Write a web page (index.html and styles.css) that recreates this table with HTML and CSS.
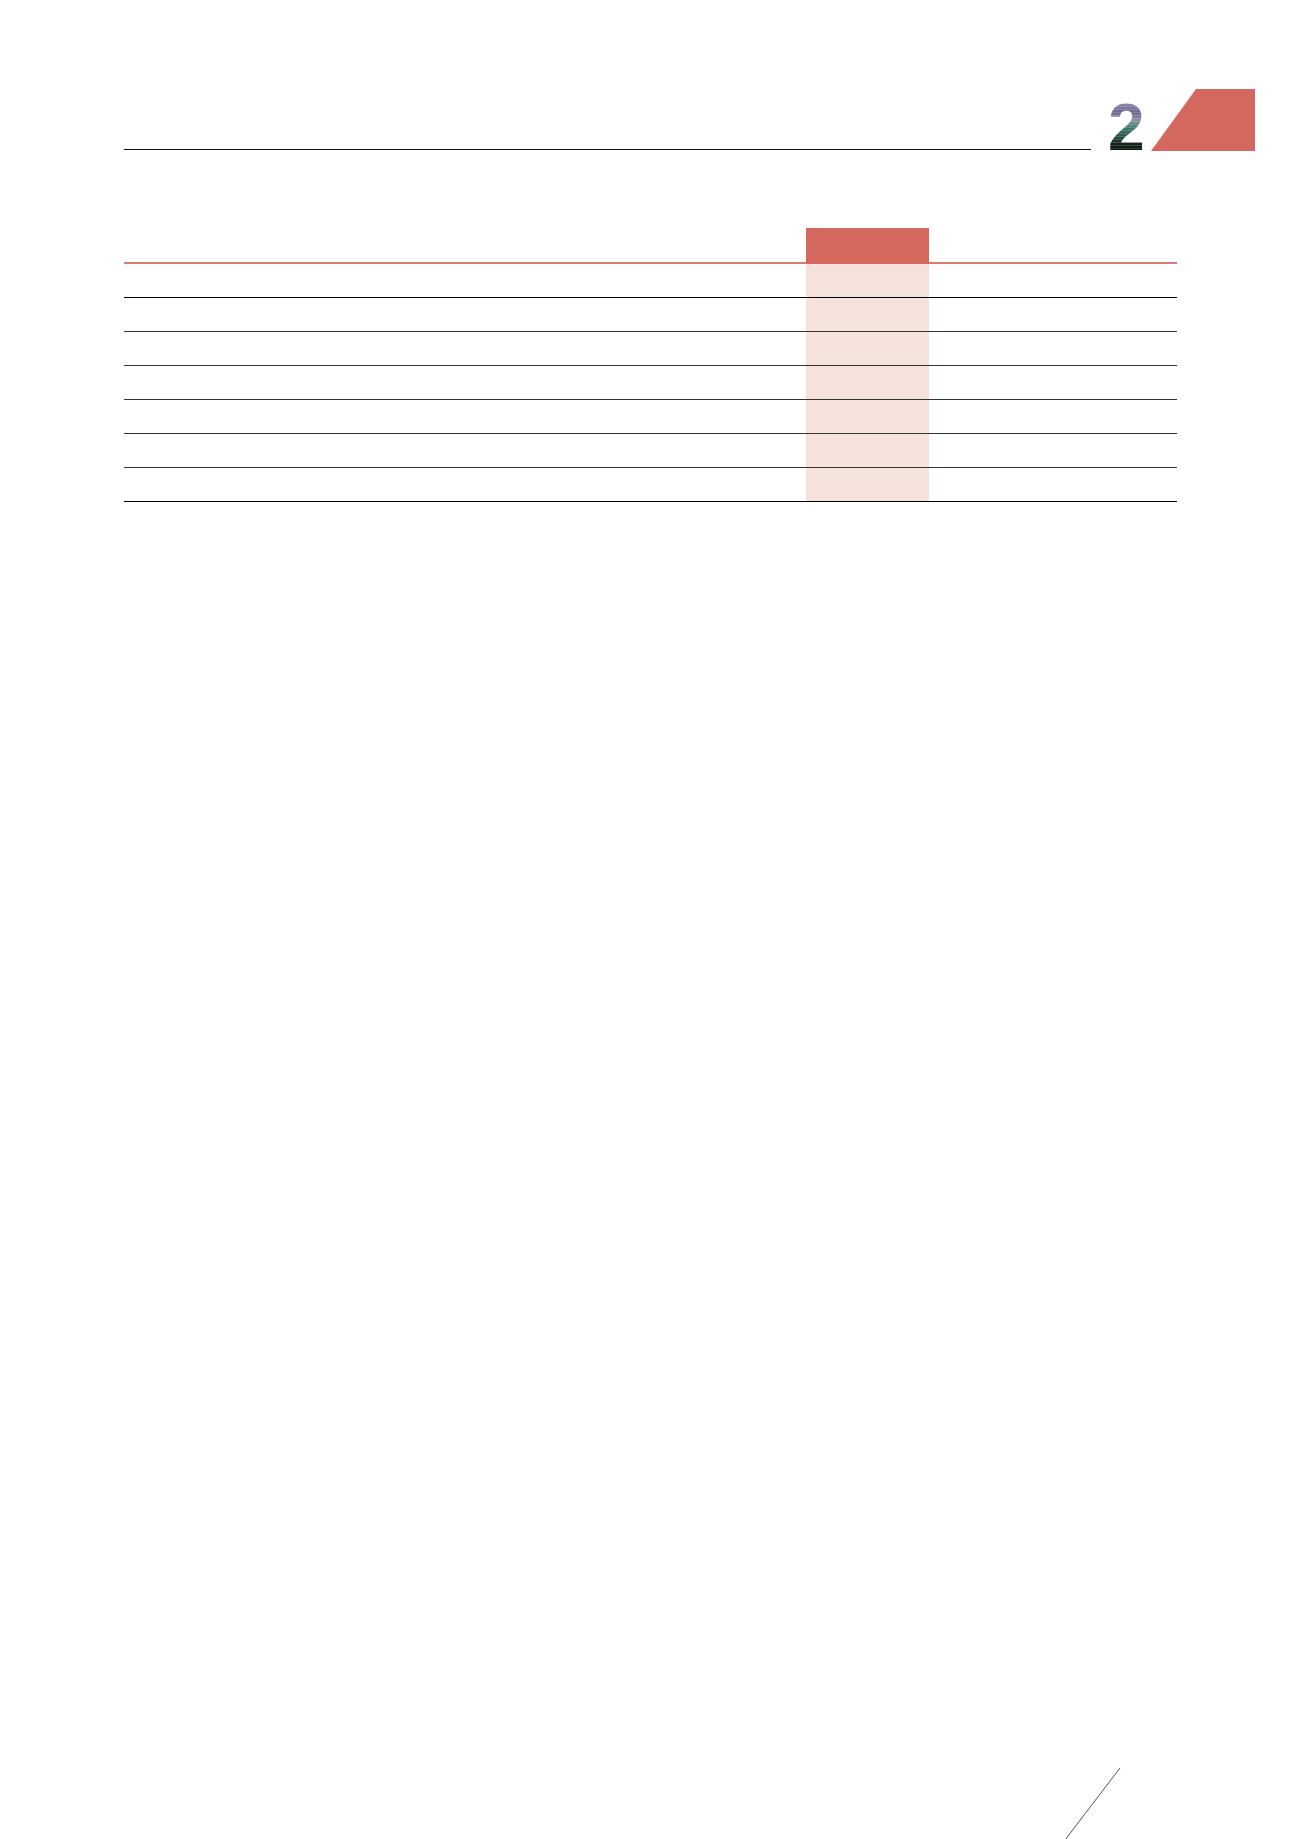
FILE: index.html
```html
<!DOCTYPE html>
<html lang="en">
<head>
<meta charset="utf-8">
<title>Page 2</title>
<link rel="stylesheet" href="styles.css">
</head>
<body>
<div class="page">
  <header class="header">
    <div class="rule"></div>
    <div class="chapter-num">2</div>
    <div class="tab"></div>
  </header>

  <div class="table">
    <div class="cell head"></div>
    <div class="cell head hl"></div>
    <div class="cell head"></div>
    <div class="cell head"></div>

    <div class="cell row first"></div><div class="cell row first hl"></div><div class="cell row first"></div><div class="cell row first"></div>
    <div class="cell row"></div><div class="cell row hl"></div><div class="cell row"></div><div class="cell row"></div>
    <div class="cell row"></div><div class="cell row hl"></div><div class="cell row"></div><div class="cell row"></div>
    <div class="cell row"></div><div class="cell row hl"></div><div class="cell row"></div><div class="cell row"></div>
    <div class="cell row"></div><div class="cell row hl"></div><div class="cell row"></div><div class="cell row"></div>
    <div class="cell row"></div><div class="cell row hl"></div><div class="cell row"></div><div class="cell row"></div>
    <div class="cell row last"></div><div class="cell row last hl"></div><div class="cell row last"></div><div class="cell row last"></div>
  </div>

  <svg class="corner-mark" width="80" height="80" viewBox="0 0 80 80" aria-hidden="true">
    <line x1="70" y1="8" x2="15" y2="80" stroke="#555" stroke-width="1"/>
  </svg>
</div>
</body>
</html>
```

FILE: styles.css
```css
html, body {
  margin: 0;
  padding: 0;
  background: #ffffff;
}

.page {
  position: relative;
  width: 1300px;
  height: 1839px;
  overflow: hidden;
  font-family: "Liberation Sans", Arial, sans-serif;
}

.header {
  display: flex;
  align-items: flex-end;
  height: 62px;
  margin-top: 89px;
  padding-left: 124px;
}

.rule {
  width: 967px;
  height: 0;
  border-bottom: 1px solid #111111;
  margin-bottom: 1px;
}

.chapter-num {
  width: 43px;
  margin-left: 17px;
  margin-bottom: -16px;
  font-size: 66px;
  font-weight: 700;
  line-height: 1.2;
  color: transparent;
  background-image:
    repeating-linear-gradient(180deg, rgba(255,255,255,0.16) 0 1px, rgba(0,0,0,0) 1px 3px),
    linear-gradient(180deg, #8c86a8 0%, #6d6690 20%, #8a96a0 36%, #3f7d6c 52%, #2c5a4a 68%, #16261c 84%, #0c130e 100%);
  background-size: 100% 100%, 100% 48px;
  background-position: 0 0, 0 15px;
  background-repeat: repeat, no-repeat;
  -webkit-background-clip: text;
  background-clip: text;
}

.tab {
  width: 104px;
  height: 62px;
  background: #d4685e;
  clip-path: polygon(45px 0, 104px 0, 104px 62px, 0 62px);
}

.table {
  display: grid;
  grid-template-columns: 682px 123px 124px 124px;
  margin-left: 124px;
  margin-top: 77px;
  width: 1053px;
}

.cell.head {
  height: 34px;
  border-bottom: 2px solid #da7a70;
}

.cell.head.hl {
  background: #d4685e;
  border-bottom-color: #d4685e;
}

.cell.row {
  height: 33px;
  border-bottom: 1px solid #333333;
}

.cell.row.first,
.cell.row.last {
  border-bottom-color: #000000;
}

.cell.row.hl {
  background: #f5e2dd;
}

.corner-mark {
  position: absolute;
  left: 1050px;
  top: 1760px;
}
```
